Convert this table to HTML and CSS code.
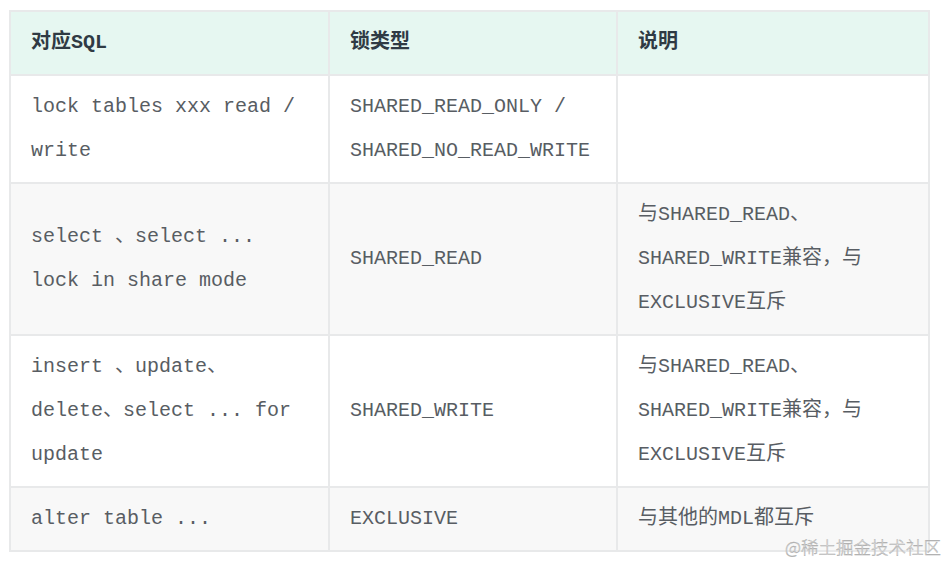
FILE: index.html
```html
<!DOCTYPE html>
<html lang="zh-CN">
<head>
<meta charset="utf-8">
<title>MDL 锁类型</title>
<link rel="stylesheet" href="styles.css">
</head>
<body>
<div class="page">
  <table class="mdl">
    <colgroup>
      <col class="c1">
      <col class="c2">
      <col class="c3">
    </colgroup>
    <thead>
      <tr><th>对应SQL</th><th>锁类型</th><th>说明</th></tr>
    </thead>
    <tbody>
      <tr>
        <td>lock tables xxx read / write</td>
        <td>SHARED_READ_ONLY / SHARED_NO_READ_WRITE</td>
        <td></td>
      </tr>
      <tr>
        <td>select 、select ... lock in share mode</td>
        <td>SHARED_READ</td>
        <td>与SHARED_READ、SHARED_WRITE兼容，与EXCLUSIVE互斥</td>
      </tr>
      <tr>
        <td>insert 、update、delete、select ... for update</td>
        <td>SHARED_WRITE</td>
        <td>与SHARED_READ、SHARED_WRITE兼容，与EXCLUSIVE互斥</td>
      </tr>
      <tr>
        <td>alter table ...</td>
        <td>EXCLUSIVE</td>
        <td>与其他的MDL都互斥</td>
      </tr>
    </tbody>
  </table>
  <div class="watermark">@稀土掘金技术社区</div>
</div>
</body>
</html>
```
FILE: styles.css
```css
html, body {
  margin: 0;
  padding: 0;
  background: #ffffff;
}

.page {
  position: relative;
  width: 948px;
  height: 563px;
  padding: 10px 0 0 9px;
  box-sizing: border-box;
}

.mdl {
  border-collapse: collapse;
  table-layout: fixed;
  width: 919px;
  font-family: "Liberation Mono", "Noto Sans CJK SC", monospace;
  font-size: 20px;
  line-height: 44px;
  color: #585d63;
}

.c1 { width: 319px; }
.c2 { width: 288px; }
.c3 { width: 312px; }

.mdl th,
.mdl td {
  border: 2px solid #e8e9ea;
  padding: 9px 16px 9px 20px;
  text-align: left;
  vertical-align: middle;
  word-wrap: break-word;
}

.mdl th {
  background: #e6f7f1;
  color: #2f3a44;
  font-weight: bold;
}

.mdl tbody tr:nth-child(even) td {
  background: #f8f8f8;
}

.watermark {
  position: absolute;
  right: 7px;
  bottom: 6px;
  font-family: "Noto Sans CJK SC", sans-serif;
  font-weight: 300;
  font-size: 17.5px;
  line-height: 20px;
  color: #ececec;
  -webkit-text-stroke: 0.4px #a8a8a8;
}
```
